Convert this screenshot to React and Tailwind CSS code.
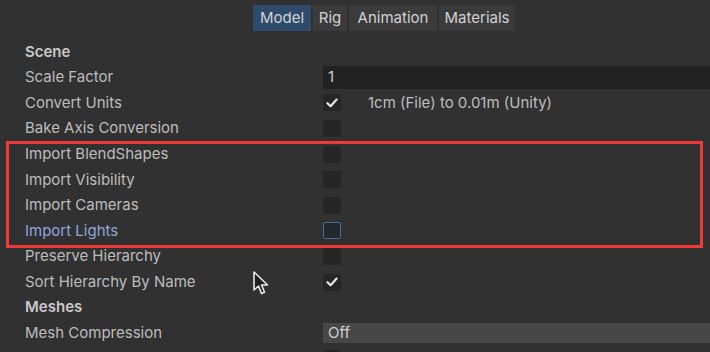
import React from 'react';

const tabs = [
  { name: 'Model', w: 'w-[58px]', active: true },
  { name: 'Rig', w: 'w-[34px]' },
  { name: 'Animation', w: 'w-[88px]' },
  { name: 'Materials', w: 'w-[76px]' },
];

function Check({ checked, focused }) {
  return (
    <div
      className={
        'w-[18px] h-[17px] rounded-[2px] flex items-center justify-center ' +
        (focused ? 'bg-[#23272e] border border-[#4e6b95]' : 'bg-[#262626]')
      }
    >
      {checked && (
        <svg width="12" height="10" viewBox="0 0 12 10">
          <path d="M1.5 5.2 L4.6 8.2 L10.6 1.6" fill="none" stroke="#e6e6e6" strokeWidth="2.2" strokeLinecap="round" strokeLinejoin="round" />
        </svg>
      )}
    </div>
  );
}

function Row({ label, header, blue, children }) {
  return (
    <div className="grid grid-cols-[323px_1fr] h-[25.6px] items-center">
      <div
        className={
          'pl-[25px] text-[15px] whitespace-nowrap ' +
          (header ? 'font-semibold text-[#c9c9c9]' : blue ? 'text-[#8ea6dc]' : 'text-[#bdbdbd]')
        }
      >
        {label}
      </div>
      <div className="flex items-center">{children}</div>
    </div>
  );
}

export default function App() {
  return (
    <div
      className="relative w-[710px] h-[352px] overflow-hidden bg-[#313131]"
      style={{ fontFamily: 'Inter, "Noto Sans", sans-serif' }}
    >
      {/* Tabs */}
      <div className="flex pt-[5px] pl-[253px] gap-[2px] h-[39px]">
        {tabs.map((t) => (
          <div
            key={t.name}
            className={
              t.w +
              ' h-[26px] flex items-center justify-center text-[15px] text-[#d2d2d2] ' +
              (t.active ? 'bg-[#2e4b6b]' : 'bg-[#3b3b3b]')
            }
          >
            {t.name}
          </div>
        ))}
      </div>

      {/* Properties */}
      <div className="flex flex-col">
        <Row label="Scene" header />
        <Row label="Scale Factor">
          <div className="w-full h-[23px] bg-[#222222] flex items-center pl-[5px] text-[15px] text-[#d0d0d0]">1</div>
        </Row>
        <Row label="Convert Units">
          <Check checked />
          <span className="ml-[27px] text-[15px] text-[#bdbdbd]">1cm (File) to 0.01m (Unity)</span>
        </Row>
        <Row label="Bake Axis Conversion"><Check /></Row>
        <Row label="Import BlendShapes"><Check /></Row>
        <Row label="Import Visibility"><Check /></Row>
        <Row label="Import Cameras"><Check /></Row>
        <Row label="Import Lights" blue><Check focused /></Row>
        <Row label="Preserve Hierarchy"><Check /></Row>
        <Row label="Sort Hierarchy By Name"><Check checked /></Row>
        <Row label="Meshes" header />
        <Row label="Mesh Compression">
          <div className="w-full h-[20px] bg-[#474747] flex items-center pl-[5px] text-[15px] text-[#d0d0d0]">Off</div>
        </Row>
        <Row label="Read/Write"><Check /></Row>
      </div>

      {/* Annotation box */}
      <div className="absolute left-[6px] top-[141px] w-[697px] h-[107px] border-[3px] border-[#f03a3a]" />

      {/* Mouse cursor */}
      <svg className="absolute left-[252px] top-[271px]" width="20" height="26" viewBox="0 0 20 26">
        <path d="M2 1 L2 19 L6.5 15 L9.5 22.5 L12.5 21.2 L9.6 14 L15.5 14 Z" fill="#202020" stroke="#e8e8e8" strokeWidth="1.6" strokeLinejoin="round" />
      </svg>
    </div>
  );
}
